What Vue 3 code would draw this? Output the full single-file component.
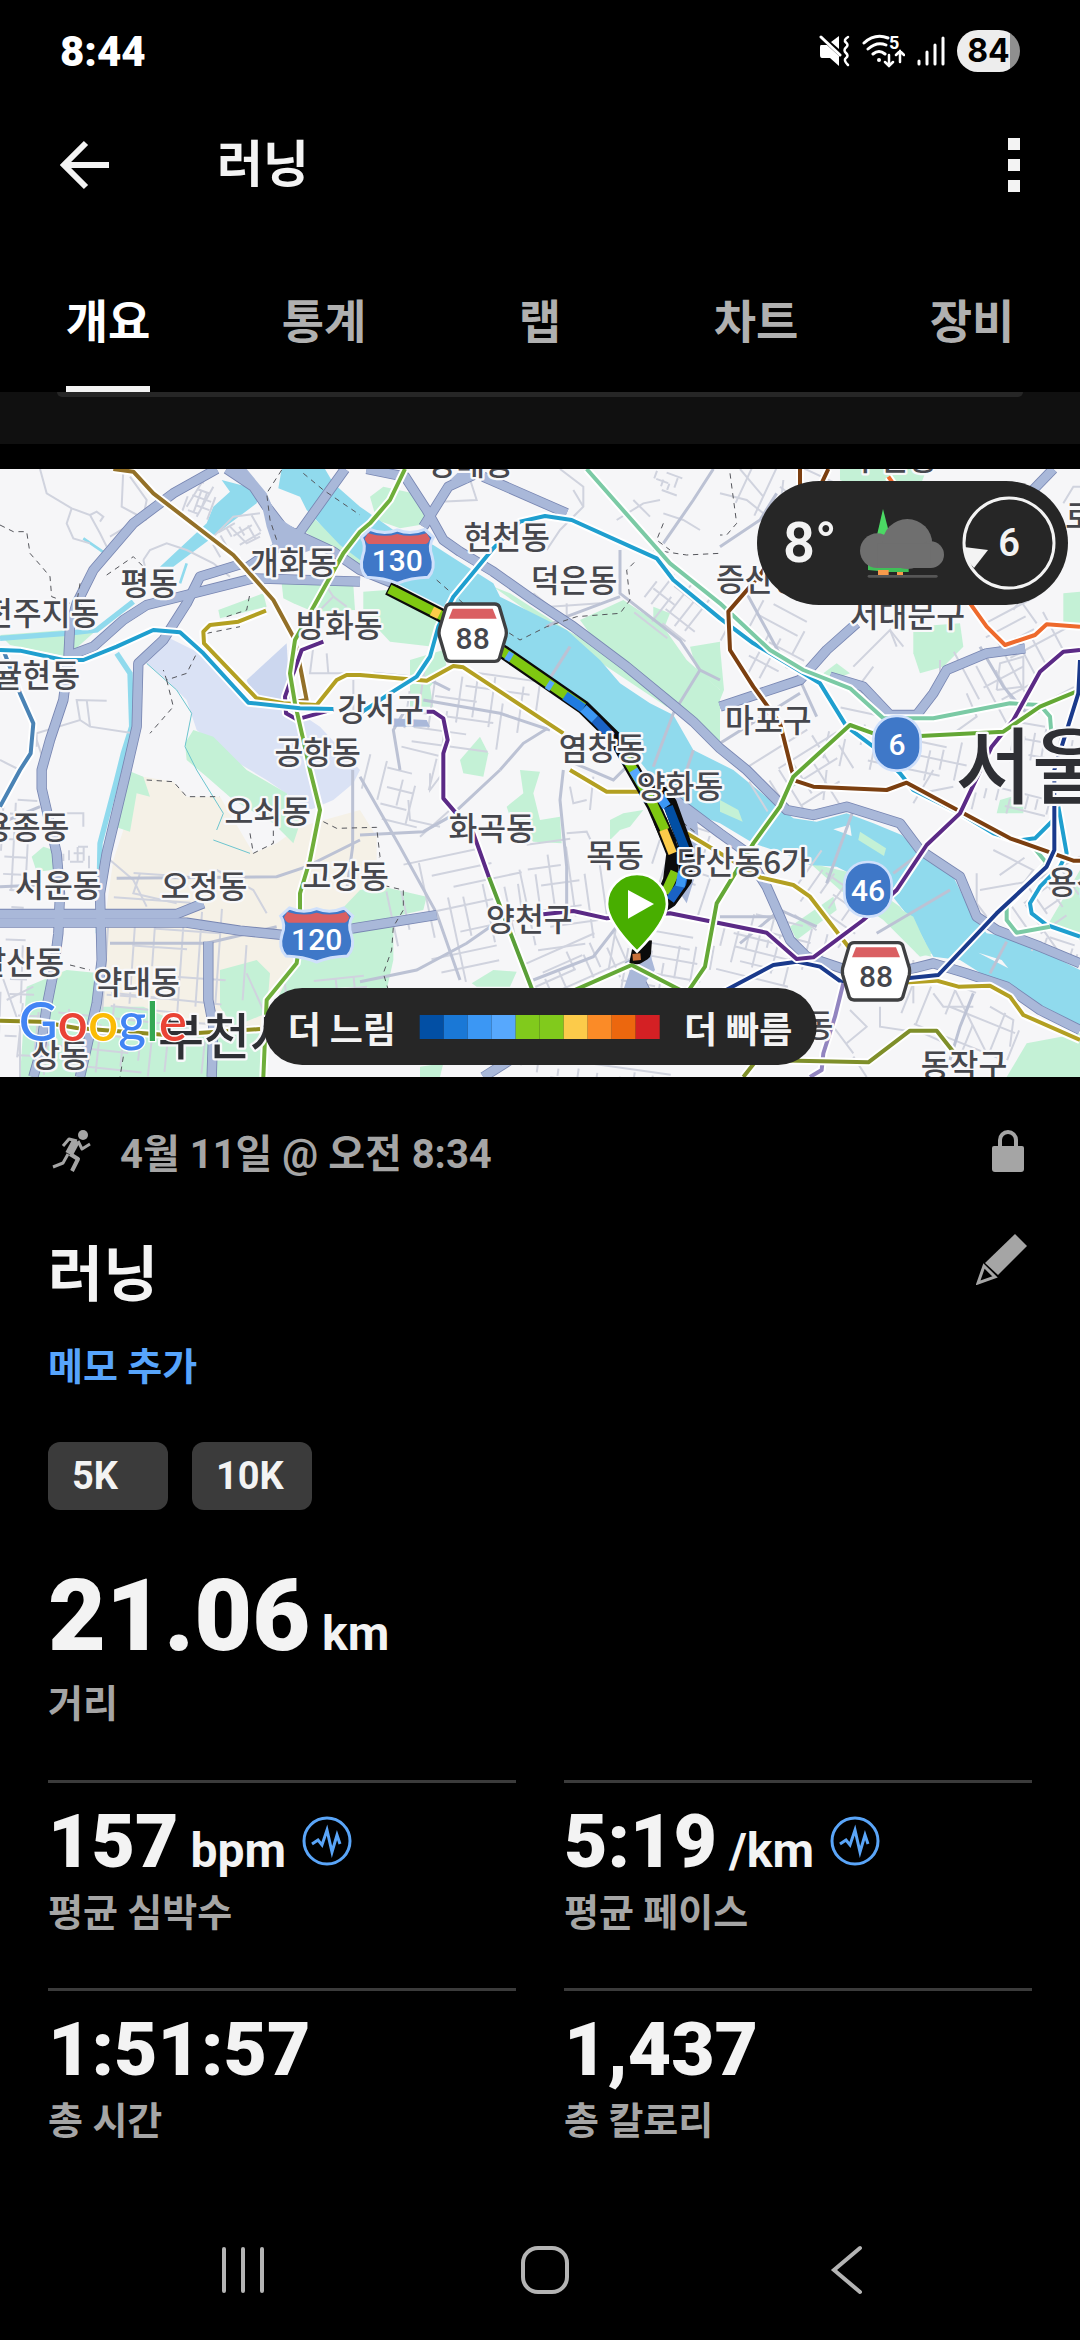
<script setup>
import { ref } from 'vue'

const tabs = ['개요', '통계', '랩', '차트', '장비']
const activeTab = ref('개요')

const badges = ['5K', '10K']

const stats = [
  { value: '157', unit: 'bpm', label: '평균 심박수', zone: true },
  { value: '5:19', unit: '/km', label: '평균 페이스', zone: true },
  { value: '1:51:57', label: '총 시간' },
  { value: '1,437', label: '총 칼로리' }
]

const paceColors = ['#024fa4', '#1a78d6', '#3b97f4', '#57a8fd', '#81ca1c', '#81ca1c', '#fccb4a', '#fb8b27', '#ec670e', '#d42024']

// map units: 3 per pixel at full width
const parks = [
  '915,215 935,170 1010,235 1080,290 1080,330 1010,280',
  '845,370 960,350 1060,375 1065,450 940,455 880,430 850,415',
  '655,450 790,400 800,440 700,465 660,475',
  '1110,110 1150,80 1240,100 1290,190 1200,205 1130,180',
  '1090,395 1160,390 1320,475 1300,560 1170,545 1090,460',
  '1230,600 1330,570 1340,620 1290,680 1300,740 1230,740',
  '0,525 200,510 290,510 200,590 30,555',
  '1740,480 1870,420 1990,500 2060,600 2160,690 2160,860 1990,710 1820,590',
  '1960,440 2010,460 1990,510 1960,500',
  '2070,560 2160,545 2160,690 2090,630',
  '2160,560 2172,690 2160,720',
  '1480,380 1530,400 1700,510 1880,610 2020,730 2000,740 1850,640 1760,580 1620,480',
  '580,810 640,830 740,930 860,1000 900,1090 880,1150 820,1090 700,1020 620,950 560,900 555,850',
  '380,930 430,950 450,1010 410,1000 390,1115 345,1100 360,990',
  '95,1190 130,1160 160,1170 160,1230 110,1235',
  '660,1530 770,1500 810,1540 800,1660 700,1700 660,1640',
  '80,1580 200,1530 300,1540 300,1640 430,1640 560,1700 640,1720 800,1720 800,1851 60,1851 70,1700',
  '900,1480 1080,1290 1150,1280 1280,1310 1270,1350 1180,1370 1180,1500 1160,1590 1080,1580 880,1590 820,1640',
  '1560,930 1620,935 1600,1000 1620,1080 1680,1070 1685,1150 1600,1145 1540,1100 1520,1040 1570,1000',
  '1830,1080 1870,1060 1930,1050 1890,1100 1860,1110 1830,1140',
  '1415,1570 1480,1530 1550,1535 1530,1580 1430,1580',
  '1380,900 1440,830 1465,880 1450,950 1390,940',
  '2740,500 2880,490 2890,560 2830,620 2760,640 2740,580',
  '2520,27 2780,27 2760,80 2640,110 2520,60',
  '3190,400 3240,395 3240,500 3190,490',
  '2470,640 2510,610 2550,640 2500,660',
  '3000,1020 3070,1000 3070,1060 2990,1060',
  '3140,1400 3240,1230 3240,1440 3180,1400',
  '3020,1851 3080,1750 3240,1720 3240,1851',
  '2160,1020 2220,1050 2230,1085 2160,1060',
  '2570,1110 2660,1165 2655,1190 2580,1150',
  '2430,1210 2560,1240 2700,1340 2800,1480 2760,1490 2650,1380 2520,1290',
  '2370,1400 2500,1310 2510,1350 2390,1440',
  '1260,1820 1330,1810 1320,1851 1260,1851'
]

const highways = [
  '680,27 760,80 800,140 850,205 1000,275 1080,330 1180,370',
  '1035,27 900,215 850,250 790,290 730,330',
  '1100,27 1215,50 1280,150 1330,240 1380,275 1480,335 1600,420 1720,500 1880,620 2020,735 2080,785 2160,865 2240,930 2330,1020 2360,1050 2440,1065 2540,1040 2700,1090 2760,1170 2820,1210 2880,1250 2930,1370 2990,1410 3120,1460 3240,1510',
  '1270,200 1345,80 1420,45',
  '1450,50 1700,160',
  '1950,960 2040,1030 2160,1120 2230,1170 2300,1280 2340,1370 2370,1440 2420,1490 2540,1530 2720,1530 2800,1510 2900,1540 3020,1580 3120,1650 3240,1710',
  '650,27 520,100 400,190 280,330 230,430 210,500 205,600 190,720 150,840 125,930 125,985 170,1180 180,1300 175,1420 160,1540 140,1640 120,1780 100,1851',
  '200,590 280,560 370,480 440,435 560,405 760,355 1080,365',
  '730,310 600,350 560,430 490,540 415,610 410,800 380,930 320,1180 300,1300 305,1500 290,1630 270,1720 240,1851',
  '0,1362 530,1362 610,1330',
  '0,1388 560,1388 720,1412 850,1425 1060,1405 1310,1365',
  '625,1445 625,1620 640,1700 635,1851',
  '2160,740 2400,660 2480,570 2570,490',
  '2490,650 2590,680 2670,765 2750,765 2800,700 2840,630 2960,580 3075,565',
  '3160,27 3070,120',
  '1940,1600 1890,1500',
  '1450,1851 1530,1800'
]

const arterials = [
  '1080,950 1200,1160 1310,1360 1380,1560', '1080,1125 1270,1115 1350,1070 1500,930', '1120,640 1280,655 1350,690',
  '1080,1565 1250,1530 1400,1450 1500,1380', '1270,720 1500,760 1650,810', '1690,930 1680,1020 1700,1220 1700,1340',
  '1500,930 1570,850 1650,800', '1700,900 1840,960 1900,900', '350,1255 830,1250 920,1220 1080,1140', '1058,930 1058,1160 1040,1290',
  '0,1280 120,1275', '0,1090 120,1040', '330,1450 620,1450 830,1400', '1860,270 1860,400 2040,540 2100,630 2160,660',
  '1640,500 1700,470 1860,410', '1990,250 2080,120 2140,27', '1710,560 1640,670', '2100,630 2020,760 1960,920', '2080,870 2060,930',
  '2560,1050 2480,1270', '2850,1290 2630,1420', '3020,1445 2970,1540', '2760,1180 2680,1240', '2160,260 2280,180 2330,100',
  '2240,400 2360,620 2600,700', '2940,560 3010,680 3080,760', '2160,850 2400,700', '2400,660 2450,770', '1200,930 1180,810 1210,760',
  '2160,1370 2330,1370', '2220,1450 2340,1350 2450,1400', '2920,1600 2880,1700 2850,1800', '1600,1560 1780,1490 1850,1400 1900,1390'
]

const minorRoads = [
  '120,27 140,100 215,145 270,165 300,220 320,260', '215,145 200,190 220,235 270,250', '270,165 290,155 310,170 300,185', '370,27 365,140 440,180',
  '390,50 440,120 430,170 330,230', '430,300 450,270 500,250 560,270 640,310 690,350', '430,300 440,340', '560,140 610,60 640,27',
  '590,170 640,80', '640,230 700,170 780,160', '690,200 740,250 780,230', '110,860 110,820 240,780 270,800 400,820', '240,780 230,720 320,722', '260,720 270,800',
  '0,900 60,930', '130,900 110,840', '980,380 1000,410 960,450', '1000,410 1040,440', '940,560 930,640 1040,640', '980,580 985,640',
  '1060,660 1060,750', '1680,27 1750,80 1750,140 1680,210 1640,270', '1750,140 1720,90', '1850,180 1930,130 1980,120', '1900,120 1950,170',
  '1990,160 2050,180 2100,210', '1400,27 1430,120 1320,125', '1600,400 1650,440 1800,430', '1700,430 1700,480', '2160,100 2240,120 2290,160', '2220,27 2290,110',
  '2340,80 2430,150', '2350,60 2340,150 2420,200', '3190,130 3220,80 3240,80', '3040,450 3060,420 3110,490', '2690,560 2670,510 2560,620', '2670,510 2710,560', '2620,620 2560,700',
  '2820,600 2820,670', '2990,690 3000,610 3070,590 3070,680 2990,690', '2900,700 2930,770 2860,820', '2640,1640 2640,1700 2770,1720 2860,1760', '2800,1600 2830,1640 2920,1640',
  '2550,1650 2600,1700 2540,1750', '2380,1690 2500,1700 2560,1780', '2970,1640 3040,1680 3030,1760', '2560,1790 2600,1851', '2740,1500 2740,1630', '2860,1580 2960,1780',
  '2930,1240 2930,1330 2960,1370', '2940,1290 3110,1260 3240,1190', '2980,1170 3100,1230 3010,1350', '2700,930 2760,1000 2860,980', '2480,930 2470,1020', '2800,930 2740,1030',
  '1225,1020 1230,1080 1320,1100', '1350,1050 1260,1130', '1340,980 1320,950 1290,990 1290,940', '1710,980 1720,1030 1760,1020', '1780,950 1770,1050', '1700,1120 1760,1115 1800,1200',
  '250,1100 250,1060 150,1060', '420,1240 400,1300 530,1330', '330,1200 400,1260 440,1340', '650,1230 760,1290 800,1360', '740,1540 790,1650', '0,1530 60,1700 60,1851', '20,1620 100,1580'
]

const borders = [
  '0,195 40,215 80,215 90,280 125,320 150,350 155,410 210,430', '320,345 400,290 440,330', '845,30 800,100 810,180 830,240', '910,40 970,90 1080,165',
  '600,560 560,640 500,660 490,630', '500,660 520,740 450,820', '440,960 520,965 560,1010 660,1010', '750,1120 760,1180 820,1150 820,1100', '970,1085 1010,1105 1130,1102 1140,1190 1080,1260 1210,1290 1210,1350 1180,1400 1175,1470 1150,1540 1165,1590',
  '1310,360 1390,430 1560,540 1640,500 1730,470 1860,460 1890,420 1880,330 1910,300', '1960,270 2060,285 2160,280', '1990,190 1970,240 2010,270', '2190,40 2210,190 2180,225 2160,225',
  '2000,1050 2090,1120', '210,1515 270,1530', '370,1790 360,1851', '240,370 230,430', '620,520 720,500', '680,470 740,450 750,400'
]

const lines = [
  { color: '#4a83b5', points: '10,570 60,700 100,790 92,880 60,930 0,1040' },
  { color: '#8f8b1f', points: '0,1682 120,1685 230,1704 500,1725 780,1707' },
  { color: '#937028', points: '340,27 400,35 460,100 700,285 820,420 885,540 920,720 860,730' },
  { color: '#5b2a86', points: '970,545 905,570 855,710 858,760 890,778 1000,748' },
  { color: '#b3a022', points: '798,452 715,485 630,495 610,515 612,550 770,715 850,730 950,735 1010,660 1040,645 1080,645 1280,662 1360,618 1390,622 1690,820' },
  { color: '#b3a022', points: '1710,930 1820,995 1920,995' },
  { color: '#b3a022', points: '2060,1120 2160,1180 2280,1252 2380,1275 2430,1310 2560,1480' },
  { color: '#1a3a8c', points: '2160,1600 2320,1515 2390,1505 2460,1520 2530,1570' },
  { color: '#b3a022', points: '2700,1568 2810,1562 2875,1580 2970,1577 3030,1610 3070,1665 3240,1740' },
  { color: '#6fae3a', points: '1215,27 1170,120 1110,190 1080,215 1030,280 885,540 870,640 885,730 910,840 930,930 960,1050 930,1200 900,1300 900,1440 890,1510 800,1620 790,1851' },
  { color: '#1f9fcf', points: '0,570 60,572 190,600 250,600 350,560 460,510 540,517 610,580 745,728 900,745 1000,747' },
  { color: '#1f9fcf', points: '1080,760 1170,700 1250,650 1290,590 1315,500 1360,410 1480,265 1560,185 1635,168 1715,180 1970,295 2020,360 2160,475 2260,550 2460,670 2540,800 2620,860 2700,940 2740,990 2880,1060 2980,1120 3050,1142 3105,1135 3160,1080 3160,1040' },
  { color: '#1f9fcf', points: '3175,1040 3200,1180 3180,1220 3120,1280 3090,1330 3095,1360 3140,1395 3240,1430' },
  { color: '#7bcaa5', points: '1760,27 2010,310 2160,430 2310,570 2410,630 2550,685 2650,775 2800,775 3030,730 3120,735 3150,770 3155,830' },
  { color: '#7bcaa5', points: '3100,1160 3140,1210 3020,1340 3020,1380 3050,1418 3150,1400' },
  { color: '#7b3f10', points: '2400,27 2400,90' },
  { color: '#7b3f10', points: '2485,27 2460,80 2280,345 2185,455 2190,570 2260,680 2340,790 2375,930 2385,962 2440,980 2660,990 2720,968 3030,1135 3220,1202 3240,1202' },
  { color: '#ee6a2d', points: '2665,50 2700,100 2860,360 2960,500 3015,555 3105,525 3140,493 3240,500' },
  { color: '#5b2a86', points: '1280,755 1300,755 1330,775 1343,840 1330,880 1330,1015 1420,1120 1467,1252' },
  { color: '#5a9f38', points: '1467,1252 1595,1585 1620,1650' },
  { color: '#5b2a86', points: '1630,1363 1720,1353 1820,1375 2010,1360 2160,1390 2300,1418 2390,1497 2440,1492 2590,1380 2690,1290 2780,1155 2880,1060 2975,860 3040,780 3120,635 3190,575 3240,570' },
  { color: '#64a836', points: '1700,1601 1895,1515 2060,1600 2115,1520 2150,1330 2260,1150 2340,1040 2380,950 2550,795 2620,820 2760,828 3010,815 3120,740 3240,690' },
  { color: '#1a3a8c', points: '3240,600 3235,700 3163,930 3163,1170 3140,1220 2990,1360 2815,1545 2700,1557' },
  { color: '#9285c0', points: '2530,1570 2505,1670 2470,1780 2465,1830 2430,1851' },
  { color: '#7f8f2a', points: '2230,1851 2270,1800 2605,1807 2730,1712 2810,1712 2860,1775' }
]

const paceParts = [
  { color: '#57a8fd', points: '1520,585 1535,594' },
  { color: '#57a8fd', points: '1642,672 1656,681' },
  { color: '#fccb4a', points: '1296,453 1318,464' },
  { color: '#1f7be0', points: '1695,707 1750,745' },
  { color: '#3b97f4', points: '1750,745 1785,778' },
  { color: '#1a62c4', points: '1785,778 1835,830' },
  { color: '#57a8fd', points: '1900,930 1925,970' },
  { color: '#3b97f4', points: '1980,1010 2000,1040' },
  { color: '#024fa4', points: '2005,1040 2060,1180' },
  { color: '#1a62c4', points: '2062,1190 2045,1270 2010,1320' },
  { color: '#3b97f4', points: '2048,1235 2040,1280' }
]

const labels = [
  { text: '개화동', x: 880, y: 343 },
  { text: '평동', x: 447, y: 405 },
  { text: '전주지동', x: 298, y: 495, anchor: 'end' },
  { text: '귤현동', x: 240, y: 680, anchor: 'end' },
  { text: '방화동', x: 1018, y: 532 },
  { text: '강서구', x: 1142, y: 783 },
  { text: '공항동', x: 953, y: 912 },
  { text: '강매동', x: 1412, y: 46 },
  { text: '현천동', x: 1520, y: 268 },
  { text: '덕은동', x: 1722, y: 396 },
  { text: '염창동', x: 1806, y: 900 },
  { text: '증산동', x: 2148, y: 393, anchor: 'start' },
  { text: '구산동', x: 2683, y: 31 },
  { text: '로', x: 3196, y: 203, anchor: 'start' },
  { text: '서대문구', x: 2722, y: 500 },
  { text: '마포구', x: 2305, y: 817 },
  { text: '오쇠동', x: 803, y: 1088 },
  { text: '고강동', x: 1037, y: 1285 },
  { text: '용종동', x: 208, y: 1137, anchor: 'end' },
  { text: '서운동', x: 175, y: 1310 },
  { text: '오정동', x: 612, y: 1315 },
  { text: '갈산동', x: 192, y: 1543, anchor: 'end' },
  { text: '약대동', x: 410, y: 1603 },
  { text: '상동', x: 180, y: 1822 },
  { text: '화곡동', x: 1475, y: 1140 },
  { text: '목동', x: 1845, y: 1220 },
  { text: '양화동', x: 2040, y: 1013 },
  { text: '양천구', x: 1588, y: 1413 },
  { text: '당산동6가', x: 2230, y: 1242 },
  { text: '용산구', x: 3143, y: 1302, anchor: 'start' },
  { text: '신길동', x: 2500, y: 1730, anchor: 'end' },
  { text: '동작구', x: 2892, y: 1850 },
  { text: '부천시', x: 474, y: 1786, anchor: 'start', kind: 'city' },
  { text: '서울', x: 2866, y: 1012, anchor: 'start', kind: 'capital' }
]

// street blocks: x, y, width, height, rotation, spacing
const districts = [
  [1220, 640, 420, 260, 8, 44], [1090, 860, 200, 240, 14, 56], [1180, 1180, 420, 380, -12, 62], [1560, 1140, 270, 330, -8, 58],
  [1500, 1460, 420, 160, -24, 40], [1830, 1420, 330, 200, 10, 42], [2160, 1380, 330, 200, 14, 38], [2380, 1220, 240, 220, 35, 46],
  [2180, 440, 260, 200, 28, 50], [2260, 830, 320, 220, -32, 52], [2480, 780, 420, 180, 12, 50], [2900, 460, 300, 300, -28, 54],
  [3040, 760, 180, 160, 10, 40], [3030, 1180, 200, 240, -35, 48], [1930, 360, 200, 180, 38, 36], [560, 70, 90, 110, 20, 26],
  [640, 190, 150, 90, -30, 34], [0, 1020, 110, 420, 3, 44], [190, 1160, 90, 60, 0, 22], [320, 1250, 460, 440, 4, 66],
  [60, 1600, 560, 250, 6, 46], [0, 1440, 120, 400, 2, 52], [860, 1560, 220, 110, -6, 48], [1960, 40, 80, 60, 20, 22],
  [2700, 1600, 420, 220, 22, 74], [2920, 1000, 280, 90, 14, 40], [3100, 1440, 140, 60, 18, 26], [1960, 1100, 200, 230, 18, 46],
  [2200, 40, 420, 300, 25, 74], [1560, 1830, 700, 60, 8, 56]
]

function streets([x, y, w, h, , step]) {
  let seed = x * 7 + y * 13 + 5
  const rnd = () => (seed = (seed * 9301 + 49297) % 233280) / 233280
  let d = ''
  for (let i = 0; i <= w; i += step * (0.7 + rnd() * 0.6)) {
    const a = rnd() * 0.5
    const b = a + 0.3 + rnd() * 0.4
    d += `M${Math.round(x + i)} ${Math.round(y + h * a)}v${Math.round(h * (b - a))}`
  }
  for (let j = 0; j <= h; j += step * (0.7 + rnd() * 0.6)) {
    const a = rnd() * 0.5
    const b = a + 0.3 + rnd() * 0.4
    d += `M${Math.round(x + w * a)} ${Math.round(y + j)}h${Math.round(w * (b - a))}`
  }
  return d
}

const blocks = districts.map((b) => ({
  d: streets(b),
  turn: `rotate(${b[4]} ${b[0] + b[2] / 2} ${b[1] + b[3] / 2})`
}))
</script>

<template>
  <div class="screen">
    <div class="status">
      <span class="clock">8:44</span>
      <div class="status-icons">
        <svg width="31" height="32" viewBox="0 0 31 32" fill="#fff">
          <path d="M2 10h6l12 11v10l-9-8H3q-2 0-2-3v-8q0-2 1-2zM12 7l8-6v13z" />
          <path d="M2 2l19 18" stroke="#fff" stroke-width="3" stroke-linecap="round" />
          <path d="M29 2q-5 3-2 5.500t0 5t0 5.500t0 5t2 7" fill="none" stroke="#fff" stroke-width="2.500" stroke-linecap="round" />
        </svg>
        <svg width="43" height="34" viewBox="0 0 43 34" fill="none" stroke="#fff" stroke-width="3" stroke-linecap="round">
          <path d="M2 9Q13-1 26 4M6 15q9-8 18-4M11 20q6-5 12 0" />
          <circle cx="17" cy="26" r="2" fill="#fff" stroke="none" />
          <path d="M27 21v11m-4-4l4 4l4-4M38 28V17m-4 4l4-4l4 4" stroke-width="2.500" />
          <text x="27" y="15" class="band">5</text>
        </svg>
        <svg width="28" height="32" viewBox="0 0 28 32" stroke="#fff" stroke-width="3" stroke-linecap="round">
          <path d="M2 26v3M10 17v12M18 10v19M26 3v26" />
        </svg>
        <span class="battery">84</span>
      </div>
    </div>

    <header class="toolbar">
      <button class="icon-btn" aria-label="뒤로">
        <svg width="49" height="50" viewBox="0 0 49 50" fill="none" stroke="#f3f3f3" stroke-width="6">
          <path d="M26 3L4 25l22 22M4 25h45" />
        </svg>
      </button>
      <h1>러닝</h1>
      <button class="icon-btn" aria-label="메뉴">
        <svg width="12" height="54" viewBox="0 0 12 54" fill="#f3f3f3">
          <path d="M0 0h12v12H0zM0 21h12v12H0zM0 42h12v12H0z" />
        </svg>
      </button>
    </header>

    <nav class="tabs">
      <button v-for="tab in tabs" :key="tab" :class="{ active: tab === activeTab }" @click="activeTab = tab">
        <span>{{ tab }}</span>
      </button>
    </nav>

    <div class="peek"><div class="peek-card"></div></div>

    <section class="map">
      <svg class="map-canvas" viewBox="0 27 3240 1824" preserveAspectRatio="xMidYMid slice">
        <rect x="0" y="27" width="3240" height="1824" fill="#f6f6f8" />
        <polygon points="430,950 520,965 560,1010 660,1010 760,1180 830,1150 900,1100 1080,1050 1130,1130 1130,1260 1080,1400 900,1560 800,1620 800,1720 640,1700 300,1640 300,1480 340,1200 390,1050" fill="#f5f1e7" />
        <polygon points="440,610 500,530 600,580 740,728 870,740 960,800 1080,930 1060,970 1000,1020 930,1050 800,960 700,900 590,810 560,720 500,660" fill="#dae2f5" />
        <polygon points="740,660 860,550 870,730 760,720" fill="#ccd7ef" />

        <g fill="#c4f1d6">
          <polygon v-for="p in parks" :key="p" :points="p" />
        </g>

        <!-- 한강 -->
        <polygon fill="#90daed" points="845,27 975,27 1000,70 1080,140 1180,210 1300,255 1370,300 1480,370 1500,410 1620,470 1700,510 1800,600 1860,670 1950,730 2020,765 2080,870 2200,930 2310,1020 2380,1075 2450,1085 2540,1060 2620,1090 2705,1125 2760,1180 2860,1250 2920,1370 2960,1420 3020,1430 3120,1470 3240,1530 3240,1700 3140,1660 2990,1570 2880,1500 2800,1490 2750,1400 2670,1300 2510,1220 2430,1215 2350,1180 2260,1150 2160,1090 2080,1060 2000,1000 1940,930 1860,830 1770,745 1520,560 1330,440 1200,375 1080,300 1020,255 920,150 900,110 835,85" />
        <polygon fill="#90daed" points="665,60 780,90 770,130 690,190 640,230 520,320 480,320 620,190 640,140 690,95" />
        <g fill="none" stroke="#90daed" stroke-width="16">
          <path d="M0 535L200 520 290 510 400 425M350 580L390 640 395 800 370 880 350 960 300 1150 295 1420" />
          <path d="M250 235L330 290M560 310L540 370" stroke-width="8" />
        </g>
        <path d="M440 610L530 690 575 760 555 860 590 930 670 1060 650 1110M640 1140L750 1180" fill="none" stroke="#6cc5cf" stroke-width="3" />
        <g fill="#c4f1d6">
          <polygon points="2160,1020 2215,1050 2228,1085 2160,1055" />
          <polygon points="2580,1115 2658,1165 2652,1188 2575,1140" />
          <polygon points="2680,1335 2740,1370 2795,1490 2750,1480" />
        </g>
        <g fill="#f6f6f8">
          <polygon points="2500,1108 2550,1094 2555,1128" />
          <polygon points="2935,1478 3005,1500 3025,1525" />
        </g>

        <g fill="none" stroke="#d0d3de" stroke-width="6">
          <path v-for="b in blocks" :key="b.d" :d="b.d" :transform="b.turn" />
          <polyline v-for="p in minorRoads" :key="p" :points="p" />
        </g>
        <g fill="none" stroke="#bcc2d4" stroke-width="9">
          <polyline v-for="p in arterials" :key="p" :points="p" />
        </g>

        <g fill="none" stroke-linejoin="round">
          <polyline v-for="p in highways" :key="p" :points="p" stroke="#7886b2" stroke-width="31" />
          <polyline v-for="p in highways" :key="p" :points="p" stroke="#a9b8d9" stroke-width="26" />
        </g>
        <polygon points="690,27 740,27 800,100 830,170 900,215 960,260 880,290 820,260 800,200 780,110" fill="#a9b8d9" />
        <polygon points="1350,60 1385,27 1440,40 1400,70" fill="#a9b8d9" />
        <polygon points="1170,775 1280,780 1290,800 1180,800" fill="#a9b8d9" />
        <polygon points="2030,1010 2090,1060 2100,1200 2060,1330 2040,1300" fill="#a9b8d9" />
        <polygon points="1870,1590 1900,1500 1950,1480 1965,1530 1910,1600" fill="#a9b8d9" />

        <g fill="none" stroke="#55565c" stroke-width="3" stroke-dasharray="16 14">
          <polyline v-for="p in borders" :key="p" :points="p" />
        </g>

        <g fill="none" stroke-linejoin="round">
          <template v-for="l in lines" :key="l.points">
            <polyline :points="l.points" stroke="#fff" stroke-width="24" />
            <polyline :points="l.points" :stroke="l.color" stroke-width="12" />
          </template>
        </g>

        <!-- 러닝 경로 -->
        <g fill="none" stroke-linejoin="round">
          <g stroke="#0b0b0b" stroke-width="42">
            <polyline points="1165,385 1320,464 1510,576 1750,742 1850,840 1900,930 1960,1035 2010,1150" />
            <polyline points="1950,960 2010,1030 2060,1170 2055,1260 2010,1322 1950,1360" />
            <polyline points="1980,1080 2020,1180 2010,1260 1990,1310" />
            <polyline points="1935,1440 1932,1480 1912,1492 1892,1488" />
          </g>
          <g stroke="#7fc811" stroke-width="28">
            <polyline points="1168,387 1320,464 1510,576 1750,742" />
            <polyline points="1870,880 1900,930 1960,1035 1995,1110" />
            <polyline points="2025,1235 1995,1300" />
          </g>
          <polyline points="1990,1110 2018,1180" stroke="#fccb4a" stroke-width="26" />
          <polyline v-for="s in paceParts" :key="s.points" :points="s.points" :stroke="s.color" stroke-width="28" />
          <polyline points="1898,1492 1922,1490" stroke="#c9713a" stroke-width="20" />
        </g>

        <text v-for="l in labels" :key="l.text" :x="l.x" :y="l.y" :text-anchor="l.anchor || 'middle'" :class="['place', l.kind]">{{ l.text }}</text>

        <!-- 도로 표지 -->
        <g v-for="s in [{ n: 130, x: 1192, y: 288 }, { n: 120, x: 950, y: 1424 }]" :key="s.n" :transform="`translate(${s.x} ${s.y})`">
          <path d="M-82-80Q-40-62 0-78Q40-62 82-80L108-56Q92-30 104 0Q116 40 92 64Q40 66 0 82Q-40 66-92 64Q-116 40-104 0Q-92-30-108-56z" fill="#3f78c8" stroke="#cfe0fb" stroke-width="9" />
          <path d="M-88-68Q-40-54 0-66Q40-54 88-68L98-52Q92-36 84-36H-84Q-92-36-98-52z" fill="#da5f62" />
          <text y="46" class="shield">{{ s.n }}</text>
        </g>
        <g v-for="s in [{ x: 1418, y: 518 }, { x: 2628, y: 1534 }]" :key="s.x" :transform="`translate(${s.x} ${s.y})`">
          <path d="M-66-86H66Q76-86 80-78L100-10Q102 0 100 10L80 78Q76 86 66 86H-66Q-76 86-80 78L-100 10Q-102 0-100-10L-80-78Q-76-86-66-86z" fill="#fff" stroke="#3f4042" stroke-width="10" />
          <path d="M-60-72H60L72-42H-72z" fill="#da5f62" />
          <text y="48" class="shield dark">88</text>
        </g>
        <g v-for="s in [{ n: 6, x: 2691, y: 850 }, { n: 46, x: 2604, y: 1288 }]" :key="s.n" :transform="`translate(${s.x} ${s.y})`">
          <rect x="-71" y="-82" width="142" height="164" rx="68" fill="#3f78c8" stroke="#cfe0fb" stroke-width="8" />
          <text y="34" class="shield">{{ s.n }}</text>
        </g>

        <!-- 출발 지점 -->
        <path d="M1911 1475Q1821 1385 1821 1332A90 90 0 0 1 2001 1332Q2001 1385 1911 1475z" fill="#48ae00" stroke="#fff" stroke-width="8" />
        <polygon points="1884,1290 1962,1332 1884,1376" fill="#fff" />

        <text x="56" y="1744" class="google"><tspan fill="#4285f4">G</tspan><tspan fill="#ea4335">o</tspan><tspan fill="#fbbc05">o</tspan><tspan fill="#4285f4">g</tspan><tspan fill="#34a853">l</tspan><tspan fill="#ea4335">e</tspan></text>
      </svg>

      <div class="weather">
        <span class="temp">8°</span>
        <svg width="84" height="69" viewBox="423 147 252 207">
          <polygon points="492,147 512,225 474,225" fill="#4bd964" />
          <path d="M447 310h122v26h-60l-62-6z" fill="#3fbf57" />
          <path d="M477 330h32v16h-32zM534 336h18v10h-18z" fill="#f79a4b" />
          <g fill="#6f6f6f">
            <circle cx="475" cy="272" r="52" />
            <circle cx="565" cy="252" r="75" />
            <circle cx="635" cy="284" r="40" />
            <rect x="475" y="250" width="160" height="74" />
          </g>
          <path d="M450 349h202" stroke="#565656" stroke-width="8" stroke-linecap="round" />
        </svg>
        <div class="wind">
          <svg width="94" height="94" viewBox="-47 -47 94 94">
            <circle r="45" fill="none" stroke="#f3f3f3" stroke-width="3" />
            <polygon points="-45,4 -21,7 -35,25 -42,17" fill="#f3f3f3" />
          </svg>
          <span>6</span>
        </div>
      </div>

      <div class="legend">
        <span>더 느림</span>
        <div class="scale">
          <i v-for="(c, i) in paceColors" :key="i" :style="{ background: c }"></i>
        </div>
        <span>더 빠름</span>
      </div>
    </section>

    <main class="summary">
      <div class="row meta">
        <svg width="40" height="42" viewBox="0 0 40 42" fill="none" stroke="#a5a5a5" stroke-linejoin="round">
          <circle cx="31" cy="5" r="5" fill="#a5a5a5" stroke="none" />
          <path d="M11 16l6-7 8 2" stroke-width="3" />
          <path d="M24 11l-7 13" stroke-width="8" />
          <path d="M26 11l4 8 8-5" stroke-width="3" />
          <path d="M18 24l8 5-6 12" stroke-width="4" />
          <path d="M16 24l-5 9-10 4" stroke-width="3" />
        </svg>
        <span class="date">4월 11일 @ 오전 8:34</span>
        <button class="icon-btn" aria-label="공개 설정">
          <svg width="32" height="42" viewBox="0 0 32 42" fill="#a5a5a5">
            <path d="M2 16h28q2 0 2 2v21q0 3-3 3H3q-3 0-3-3V18q0-2 2-2z" />
            <path d="M8 17V10a8 8 0 0 1 16 0v7" fill="none" stroke="#a5a5a5" stroke-width="4" />
          </svg>
        </button>
      </div>

      <div class="row name">
        <h2>러닝</h2>
        <button class="icon-btn edit" aria-label="이름 편집">
          <svg width="52" height="52" viewBox="0 0 52 52" fill="#a5a5a5">
            <path d="M39 1l12 12L22 42 9 30z" />
            <path d="M8 33L19 44 2 50z" fill="none" stroke="#a5a5a5" stroke-width="3" />
          </svg>
        </button>
      </div>

      <a class="note" href="#">메모 추가</a>

      <div class="badges">
        <button v-for="b in badges" :key="b">{{ b }}</button>
      </div>

      <div class="distance">
        <p class="value"><b>21.06</b> <span>km</span></p>
        <p class="label">거리</p>
      </div>

      <div class="grid">
        <div v-for="s in stats" :key="s.label" class="stat">
          <p class="value">
            <b>{{ s.value }}</b>
            <span v-if="s.unit">{{ s.unit }}</span>
            <svg v-if="s.zone" width="50" height="50" viewBox="0 0 50 50" fill="none" stroke="#5aa5f8" stroke-width="3">
              <circle cx="25" cy="25" r="23" />
              <path d="M10 28l6-4 4 5 5-15 5 22 5-17 3 9" />
            </svg>
          </p>
          <p class="label">{{ s.label }}</p>
        </div>
      </div>
    </main>

    <footer class="nav">
      <button class="icon-btn" aria-label="최근 앱">
        <svg width="50" height="50" viewBox="0 0 50 50" stroke="#b4b4b4" stroke-width="4" stroke-linecap="round">
          <path d="M6 4v42M25 4v42M44 4v42" />
        </svg>
      </button>
      <button class="icon-btn" aria-label="홈">
        <svg width="50" height="50" viewBox="0 0 50 50" fill="none" stroke="#b4b4b4" stroke-width="4">
          <rect x="3" y="3" width="44" height="44" rx="15" />
        </svg>
      </button>
      <button class="icon-btn" aria-label="이전">
        <svg width="50" height="50" viewBox="0 0 50 50" fill="none" stroke="#b4b4b4" stroke-width="4" stroke-linecap="round">
          <path d="M38 3L12 25l26 22" />
        </svg>
      </button>
    </footer>
  </div>
</template>

<style>
body {
  margin: 0;
  background: #000;
}
</style>

<style scoped>
.screen {
  display: flex;
  flex-direction: column;
  min-height: 100vh;
  background: #000;
  color: #f3f3f3;
  font-family: Roboto, "Noto Sans CJK KR", sans-serif;
  font-weight: 700;
}

h1, h2, p {
  margin: 0;
}

button {
  padding: 0;
  border: none;
  background: none;
  color: inherit;
  font: inherit;
  cursor: pointer;
}

svg {
  display: block;
}

.status {
  display: flex;
  justify-content: space-between;
  align-items: center;
  height: 102px;
  padding: 0 60px;
  box-sizing: border-box;
}
.clock {
  color: #fff;
  font-size: 42px;
  font-weight: 900;
}
.status-icons {
  display: flex;
  align-items: center;
  gap: 12px;
}
.band {
  fill: #fff;
  stroke: none;
  font-size: 18px;
}
.battery {
  width: 63px;
  border-radius: 21px;
  background: linear-gradient(90deg, #ededed 84%, #8f8f8f 84%);
  color: #000;
  font-family: Inter, sans-serif;
  font-size: 32px;
  line-height: 42px;
  text-align: center;
}

.toolbar {
  display: flex;
  align-items: center;
  height: 126px;
  padding: 0 60px;
}
.toolbar h1 {
  flex: 1;
  margin-left: 108px;
  font-size: 50px;
  line-height: 60px;
}

.tabs {
  display: grid;
  grid-template-columns: repeat(5, 1fr);
  height: 164px;
  color: #b0b0b0;
}
.tabs button {
  display: flex;
  justify-content: center;
}
.tabs span {
  height: 100%;
  padding-top: 62px;
  border-bottom: 6px solid transparent;
  box-sizing: border-box;
  font-size: 46px;
  line-height: 64px;
}
.tabs .active span {
  border-color: #f3f3f3;
  color: #fff;
}

.peek {
  height: 52px;
  margin-bottom: 25px;
  padding: 0 57px;
  background: #101010;
}
.peek-card {
  height: 5px;
  border-radius: 0 0 12px 12px;
  background: #262626;
}

.map {
  position: relative;
  overflow: hidden;
}
.map-canvas {
  width: 100%;
}
.place {
  fill: #46474d;
  stroke: #f8f8fa;
  stroke-width: 14px;
  stroke-linejoin: round;
  paint-order: stroke;
  font-family: "Noto Sans CJK KR", sans-serif;
  font-size: 94px;
  font-weight: 500;
}
.place.city {
  fill: #2e2f34;
  font-size: 150px;
}
.place.capital {
  fill: #2e2f34;
  font-size: 250px;
}
.shield {
  fill: #fff;
  font-size: 90px;
  font-weight: 500;
  text-anchor: middle;
}
.shield.dark {
  fill: #46474d;
}
.google {
  stroke: #fff;
  stroke-width: 8px;
  paint-order: stroke;
  font-family: Lato, sans-serif;
  font-size: 160px;
  font-weight: 500;
}

.weather {
  position: absolute;
  top: 12px;
  right: 12px;
  display: flex;
  align-items: center;
  gap: 18px;
  width: 311px;
  height: 124px;
  padding: 0 12px 0 26px;
  box-sizing: border-box;
  border-radius: 62px;
  background: #262626;
}
.temp {
  flex: 1;
  font-size: 56px;
  font-weight: 600;
}
.wind {
  display: grid;
  place-items: center;
}
.wind > * {
  grid-area: 1 / 1;
}
.wind span {
  font-size: 38px;
  font-weight: 600;
}

.legend {
  position: absolute;
  bottom: 12px;
  left: 50%;
  transform: translateX(-50%);
  display: flex;
  align-items: center;
  gap: 24px;
  height: 77px;
  padding: 0 24px;
  border-radius: 39px;
  background: #262626;
  font-size: 36px;
  white-space: nowrap;
}
.scale {
  display: flex;
}
.scale i {
  width: 24px;
  height: 24px;
}

.summary {
  padding: 44px 48px 0;
  font-size: 38px;
}
.row {
  display: flex;
  align-items: center;
  justify-content: space-between;
}
.meta {
  height: 60px;
  padding: 0 8px 0 4px;
  color: #a5a5a5;
}
.date {
  flex: 1;
  margin-left: 28px;
  font-size: 40px;
}
.name {
  height: 72px;
  margin-top: 52px;
}
.name h2 {
  font-size: 60px;
}
.edit {
  margin-right: 4px;
  align-self: flex-start;
}
.note {
  display: block;
  margin-top: 32px;
  color: #57a4fb;
  line-height: 60px;
  text-decoration: none;
}

.badges {
  display: flex;
  gap: 24px;
  margin-top: 45px;
}
.badges button {
  min-width: 120px;
  height: 68px;
  padding: 0 24px;
  border-radius: 12px;
  background: #3b3b3b;
  text-align: left;
}

.value {
  display: flex;
  align-items: baseline;
  gap: 12px;
}
.value span {
  font-size: 48px;
}
.value svg {
  align-self: center;
  margin-left: 4px;
}
.label {
  color: #a5a5a5;
  line-height: 56px;
}
.distance {
  margin-top: 46px;
}
.distance b {
  font-size: 100px;
  line-height: 120px;
}

.grid {
  display: grid;
  grid-template-columns: 1fr 1fr;
  column-gap: 48px;
  margin-top: 48px;
}
.stat {
  height: 208px;
  padding-top: 14px;
  border-top: 3px solid #3b3b3b;
  box-sizing: border-box;
}
.stat b {
  font-size: 75px;
  line-height: 88px;
}

.nav {
  display: flex;
  justify-content: space-around;
  align-items: center;
  height: 140px;
  margin-top: auto;
  padding: 0 82px 0 92px;
}
</style>
